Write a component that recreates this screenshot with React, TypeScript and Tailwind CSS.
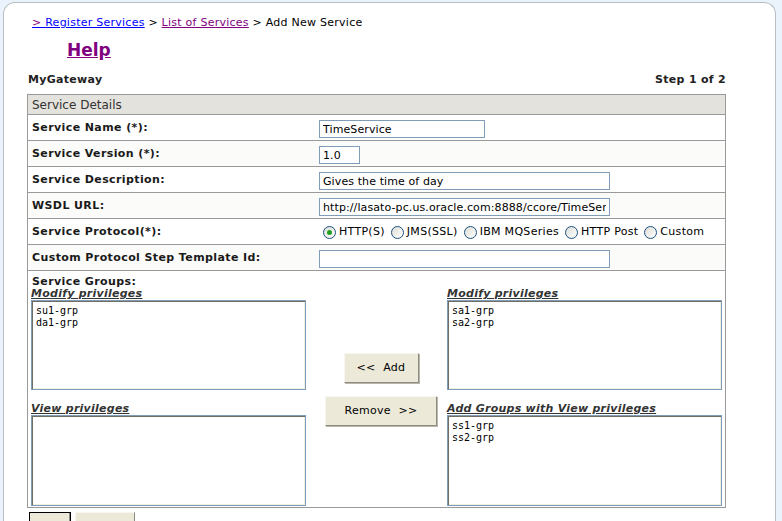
const font = { fontFamily: '"DejaVu Sans", Verdana, sans-serif' };

type Row = { label: string; kind: "input" | "radio"; value?: string; width?: string; alt?: boolean };

const rows: Row[] = [
  { label: "Service Name (*):", kind: "input", value: "TimeService", width: "w-[166px]" },
  { label: "Service Version (*):", kind: "input", value: "1.0", width: "w-[41px]", alt: true },
  { label: "Service Description:", kind: "input", value: "Gives the time of day", width: "w-[291px]" },
  {
    label: "WSDL URL:",
    kind: "input",
    value: "http://lasato-pc.us.oracle.com:8888/ccore/TimeService",
    width: "w-[291px]",
    alt: true,
  },
  { label: "Service Protocol(*):", kind: "radio" },
  { label: "Custom Protocol Step Template Id:", kind: "input", value: "", width: "w-[291px]", alt: true },
];

const protocols = ["HTTP(S)", "JMS(SSL)", "IBM MQSeries", "HTTP Post", "Custom"];

function Radio({ checked }: { checked?: boolean }) {
  return (
    <span className="flex h-[13px] w-[13px] items-center justify-center rounded-full border border-[#1c5180] bg-gradient-to-br from-[#dcdcd6] to-white">
      {checked && <span className="h-[5px] w-[5px] rounded-full bg-[#21a121]" />}
    </span>
  );
}

function ListBox({ items, h }: { items: string[]; h: string }) {
  return (
    <div
      className={`${h} w-[275px] border border-[#7f9db9] bg-white px-[4px] pt-[4px] shadow-[inset_1px_1px_0_#716f64,inset_-1px_-1px_0_#f1efe2]`}
    >
      {items.map((it) => (
        <div key={it} className="text-[10px] leading-[12px] text-black" style={{ fontFamily: '"DejaVu Sans Mono", monospace' }}>
          {it}
        </div>
      ))}
    </div>
  );
}

function GroupLabel({ children }: { children: string }) {
  return (
    <div className="h-[12px] text-[11px] leading-[11px] font-bold italic tracking-[0.25px] text-[#333] underline">
      {children}
    </div>
  );
}

function XpButton({ children, className }: { children: string; className: string }) {
  return (
    <button
      className={`${className} whitespace-pre border border-[#f7f6f0] border-r-[#8d8b84] border-b-[#8d8b84] bg-[#ece9d8] text-[11px] tracking-[0.3px] text-black shadow-[1px_1px_0_#b9b6aa]`}
    >
      {children}
    </button>
  );
}

export default function App() {
  return (
    <div className="min-h-screen bg-[#eaf3fb] pl-[3px] pr-[6px] pt-[2px]" style={font}>
      <div className="min-h-[519px] rounded-t-[12px] border border-b-0 border-[#b9bec4] bg-white pl-[23px] pt-[13px]">
        <div className="ml-[5px] h-[14px] text-[11px] leading-[14px] tracking-[0.25px] text-black">
          <a className="text-[#0000ff] underline">
            <span className="text-[#800080]">&gt; </span>Register Services
          </a>{" "}
          &gt; <a className="text-[#800080] underline">List of Services</a> &gt; Add New Service
        </div>

        <div className="ml-[40px] mt-[10px] h-[20px] text-[17px] leading-[20px] font-bold text-[#800080] underline">
          Help
        </div>

        <div className="mt-[13px] flex h-[13px] w-[699px] justify-between text-[11px] leading-[13px] font-bold tracking-[0.3px] text-[#222]">
          <span className="pl-[1px]">MyGateway</span>
          <span>Step 1 of 2</span>
        </div>

        <div className="mt-[8px] w-[699px] border border-[#9a9a9a]">
          <div className="h-[20px] border-b border-[#9a9a9a] bg-[#e4e2dc] pl-[4px] pt-[1px] text-[12px] leading-[19px] text-[#333]">
            Service Details
          </div>

          {rows.map((r) => (
            <div
              key={r.label}
              className={`grid h-[26px] grid-cols-[287px_1fr] items-center border-b border-[#9a9a9a] ${r.alt ? "bg-[#fbfbf9]" : "bg-white"}`}
            >
              <div className="pl-[4px] pt-[1px] text-[11px] font-bold tracking-[0.4px] text-[#1a1a1a]">{r.label}</div>
              {r.kind === "input" ? (
                <div className="pl-[4px]">
                  <input
                    readOnly
                    value={r.value}
                    className={`${r.width} h-[18px] border border-[#7f9db9] bg-white px-[3px] text-[11px] tracking-[0.1px] text-black outline-none`}
                    style={font}
                  />
                </div>
              ) : (
                <div className="flex items-center pl-[8px] pt-[2px] text-[11px] tracking-[0.3px] text-black">
                  {protocols.map((p, i) => (
                    <span key={p} className="mr-[6px] flex items-center gap-[3px]">
                      <Radio checked={i === 0} />
                      <span>{p}</span>
                    </span>
                  ))}
                </div>
              )}
            </div>
          ))}

          <div className="pb-[1px] pt-[4px]">
            <div className="h-[13px] pl-[4px] text-[11px] leading-[13px] font-bold tracking-[0.4px] text-[#1a1a1a]">
              Service Groups:
            </div>
            <div className="grid grid-cols-[275px_141px_275px] pl-[3px]">
              <div>
                <GroupLabel>Modify privileges</GroupLabel>
                <ListBox items={["su1-grp", "da1-grp"]} h="h-[90px]" />
                <div className="mt-[13px]">
                  <GroupLabel>View privileges</GroupLabel>
                </div>
                <ListBox items={[]} h="h-[91px]" />
              </div>
              <div className="flex flex-col items-center pl-[9px] pt-[65px]">
                <XpButton className="h-[30px] w-[75px]">{"<<  Add"}</XpButton>
                <XpButton className="mt-[13px] h-[30px] w-[112px]">{"Remove  >>"}</XpButton>
              </div>
              <div>
                <GroupLabel>Modify privileges</GroupLabel>
                <ListBox items={["sa1-grp", "sa2-grp"]} h="h-[90px]" />
                <div className="mt-[13px]">
                  <GroupLabel>Add Groups with View privileges</GroupLabel>
                </div>
                <ListBox items={["ss1-grp", "ss2-grp"]} h="h-[91px]" />
              </div>
            </div>
          </div>
        </div>

        <div className="mt-[4px] flex gap-[4px] pl-[2px]">
          <button className="h-[22px] w-[42px] border border-black bg-[#ece9d8] shadow-[inset_-1px_-1px_0_#8d8b84]" />
          <button className="h-[22px] w-[60px] border border-[#f7f6f0] border-r-[#8d8b84] bg-[#ece9d8]" />
        </div>
      </div>
    </div>
  );
}
